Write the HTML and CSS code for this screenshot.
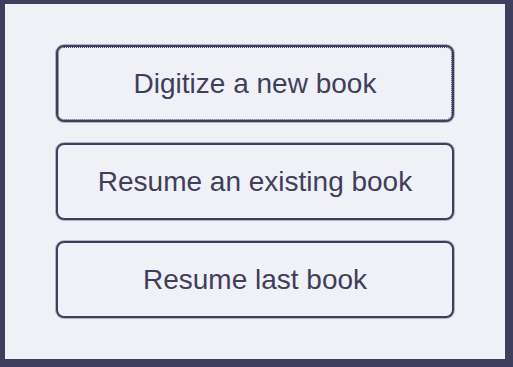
FILE: index.html
```html
<!DOCTYPE html>
<html>
<head>
<meta charset="utf-8">
<link rel="stylesheet" href="styles.css">
</head>
<body>
<div class="frame">
  <div class="menu">
    <button class="item focused">Digitize a new book</button>
    <button class="item">Resume an existing book</button>
    <button class="item">Resume last book</button>
  </div>
</div>
</body>
</html>
```
FILE: styles.css
```css
html, body {
  margin: 0;
  padding: 0;
  background: #403e5c;
}
.frame {
  box-sizing: border-box;
  width: 513px;
  height: 367px;
  border-style: solid;
  border-color: #403e5c;
  border-width: 4px 8px 8px 5px;
  background: #f0f1f7;
}
.menu {
  display: flex;
  flex-direction: column;
  gap: 21px;
  padding: 41px 51px 0 51px;
}
.item {
  box-sizing: border-box;
  height: 77px;
  width: 100%;
  border: 2px solid #403e5c;
  border-radius: 8px;
  box-shadow: 0 0 0 1px rgba(64, 62, 92, 0.35);
  background: #f0f1f7;
  color: #403e5c;
  font-family: "Liberation Sans", Arial, sans-serif;
  font-size: 28px;
  padding: 0;
  margin: 0;
}
.focused {
  outline: 1px dotted #403e5c;
  outline-offset: -3px;
}
```
